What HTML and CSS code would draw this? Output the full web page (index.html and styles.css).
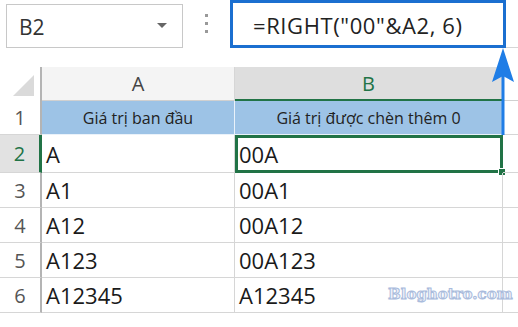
FILE: index.html
```html
<!doctype html>
<html lang="vi">
<head>
	<meta charset="UTF-8">
	<title>RIGHT</title>
	<link rel="stylesheet" href="styles.css">
</head>
<body>
	<div class="sheet">
		<div class="bar">
			<div class="namebox">
				<span>B2</span>
				<i class="caret"></i>
			</div>
			<div class="dots"><b></b><b></b><b></b></div>
			<div class="formula">=RIGHT("00"&amp;A2, 6)</div>
			<div class="bar-rest"></div>
		</div>
		<div class="grid">
			<div class="corner"><i></i></div>
			<div class="colhead">A</div>
			<div class="colhead on">B</div>
			<div class="colhead rest"></div>

			<div class="rowhead">1</div>
			<div class="cell title">Giá trị ban đầu</div>
			<div class="cell title">Giá trị được chèn thêm 0</div>
			<div class="cell rest"></div>

			<div class="rowhead on">2</div>
			<div class="cell">A</div>
			<div class="cell picked">00A<i class="handle"></i></div>
			<div class="cell rest"></div>

			<div class="rowhead">3</div>
			<div class="cell">A1</div>
			<div class="cell">00A1</div>
			<div class="cell rest"></div>

			<div class="rowhead">4</div>
			<div class="cell">A12</div>
			<div class="cell">00A12</div>
			<div class="cell rest"></div>

			<div class="rowhead">5</div>
			<div class="cell">A123</div>
			<div class="cell">00A123</div>
			<div class="cell rest"></div>

			<div class="rowhead">6</div>
			<div class="cell">A12345</div>
			<div class="cell">A12345</div>
			<div class="cell rest"></div>
		</div>
		<!-- mui ten chi len thanh cong thuc -->
		<svg class="arrow" width="24" height="90" viewBox="0 0 24 90">
			<line x1="12" y1="20" x2="12" y2="88" stroke="#1f7de6" stroke-width="3"/>
			<polygon points="12,1 1,35 12,29 23,35" fill="#1f7de6"/>
		</svg>
		<div class="mark">Bloghotro.com</div>
	</div>
</body>
</html>
```

FILE: styles.css
```css
*{
	margin: 0;
	padding: 0;
	box-sizing: border-box;
}
body{
	background: #fff;
	font-family: "Open Sans", "Noto Sans", sans-serif;
	color: #222;
}
.sheet{
	width: 518px;
	height: 327px;
	position: relative;
	overflow: hidden;
}
.bar{
	display: flex;
	align-items: flex-start;
	height: 67px;
}
.namebox{
	margin: 4px 0 0 6px;
	width: 177px;
	height: 44px;
	border: 1px solid #c8c8c8;
	display: flex;
	align-items: center;
	justify-content: space-between;
	padding: 2px 15px 0 12px;
	font-size: 21px;
	color: #333;
}
.caret{
	width: 0;
	height: 0;
	border-left: 5px solid transparent;
	border-right: 5px solid transparent;
	border-top: 5px solid #666;
	margin-top: -4px;
}
.dots{
	width: 47px;
	display: flex;
	flex-direction: column;
	align-items: center;
	gap: 5px;
	padding-top: 14px;
}
.dots b{
	width: 3px;
	height: 3px;
	background: #999;
}
.formula{
	width: 276px;
	height: 48px;
	border: 3px solid #1b6fd0;
	padding: 7px 0 0 20px;
	font-size: 22px;
	letter-spacing: 0.6px;
	color: #222;
	white-space: nowrap;
}
.bar-rest{
	flex: 1;
	height: 48px;
	border-bottom: 1px solid #d6d6d6;
}
.grid{
	display: grid;
	grid-template-columns: 42px 193px 268px 15px;
	grid-template-rows: 34px 34px 38px 35px 35px 35px 35px;
}
.corner{
	border-right: 2px solid #b4b4b4;
	display: flex;
	align-items: flex-end;
	justify-content: flex-end;
	padding: 0 6px 5px 0;
}
.corner i{
	width: 0;
	height: 0;
	border-left: 21px solid transparent;
	border-bottom: 21px solid #dadada;
}
.colhead{
	background: #f4f4f4;
	border-right: 1px solid #d6d6d6;
	border-bottom: 1px solid #d0d0d0;
	display: flex;
	align-items: center;
	justify-content: center;
	font-size: 20px;
	color: #444;
}
.colhead.on{
	background: #dedede;
	color: #217346;
	border-bottom: 2px solid #217346;
}
.colhead.rest{
	background: #fff;
	border-right: 0;
}
.rowhead{
	border-right: 2px solid #b4b4b4;
	border-bottom: 1px solid #d6d6d6;
	display: flex;
	align-items: center;
	justify-content: center;
	font-size: 20px;
	color: #555;
}
.rowhead.on{
	background: #e2e2e2;
	color: #217346;
	border-right: 3px solid #217346;
}
.cell{
	border-right: 1px solid #d6d6d6;
	border-bottom: 1px solid #d6d6d6;
	display: flex;
	align-items: center;
	padding-left: 4px;
	font-size: 22px;
	color: #1a1a1a;
	white-space: nowrap;
	position: relative;
}
.cell.title{
	background: #9dc3e6;
	border-right: 1px solid #eaf2fa;
	border-bottom: 1px solid #eaf2fa;
	justify-content: center;
	padding: 0;
	font-size: 16px;
	color: #222;
}
.cell.rest{
	border-right: 0;
}
.cell.picked{
	border: 3px solid #217346;
	padding-left: 1px;
}
.handle{
	position: absolute;
	right: -6px;
	bottom: -6px;
	width: 8px;
	height: 8px;
	background: #217346;
	border: 1px solid #fff;
}
.arrow{
	position: absolute;
	left: 491px;
	top: 47px;
}
.mark{
	position: absolute;
	left: 388px;
	top: 285px;
	font-family: "DejaVu Serif", serif;
	font-weight: bold;
	font-size: 15px;
	color: #eef2fa;
	-webkit-text-stroke: 1px #a9bbdc;
}
```
